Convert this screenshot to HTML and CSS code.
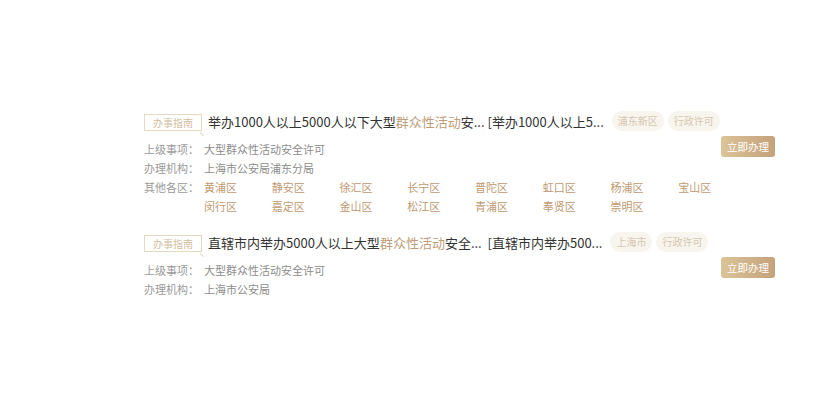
FILE: index.html
```html
<!DOCTYPE html>
<html lang="zh-CN">
<head>
<meta charset="utf-8">
<title>办事指南</title>
<link rel="stylesheet" href="styles.css">
</head>
<body>
<div class="list">
  <div class="item">
    <div class="head">
      <span class="guide">办事指南</span>
      <span class="title">举办1000人以上5000人以下大型<span class="hl">群众性活动</span>安... [举办1000人以上5...</span>
      <span class="pill first">浦东新区</span>
      <span class="pill">行政许可</span>
    </div>
    <div class="body">
      <div class="info">
        <div class="row"><span class="label">上级事项：</span><span class="value">大型群众性活动安全许可</span></div>
        <div class="row"><span class="label">办理机构：</span><span class="value">上海市公安局浦东分局</span></div>
        <div class="row"><span class="label">其他各区：</span>
          <div class="districts">
            <a>黄浦区</a><a>静安区</a><a>徐汇区</a><a>长宁区</a><a>普陀区</a><a>虹口区</a><a>杨浦区</a><a>宝山区</a>
            <a>闵行区</a><a>嘉定区</a><a>金山区</a><a>松江区</a><a>青浦区</a><a>奉贤区</a><a>崇明区</a>
          </div>
        </div>
      </div>
      <span class="btn">立即办理</span>
    </div>
  </div>
  <div class="item">
    <div class="head">
      <span class="guide">办事指南</span>
      <span class="title">直辖市内举办5000人以上大型<span class="hl">群众性活动</span>安全...&nbsp; [直辖市内举办500...</span>
      <span class="pill first">上海市</span>
      <span class="pill">行政许可</span>
    </div>
    <div class="body">
      <div class="info">
        <div class="row"><span class="label">上级事项：</span><span class="value">大型群众性活动安全许可</span></div>
        <div class="row"><span class="label">办理机构：</span><span class="value">上海市公安局</span></div>
      </div>
      <span class="btn">立即办理</span>
    </div>
  </div>
</div>
</body>
</html>
```
FILE: styles.css
```css
html, body {
  margin: 0;
  padding: 0;
  background: #ffffff;
}
body {
  font-family: "Noto Sans CJK SC", "Noto Sans", sans-serif;
}
.list {
  padding: 110px 0 0 144px;
  width: 631px;
}
.item + .item {
  margin-top: 15.5px;
}
.head {
  display: flex;
  align-items: center;
  height: 22px;
  white-space: nowrap;
}
.guide {
  position: relative;
  box-sizing: border-box;
  height: 17px;
  line-height: 15px;
  padding: 0 8px;
  border: 1px solid #e6d8c2;
  color: #d2bd9c;
  font-size: 10px;
  margin-right: 6px;
  margin-top: 2px;
}
.guide::after {
  content: "";
  position: absolute;
  right: -4px;
  bottom: -3px;
  width: 5px;
  height: 1px;
  background: #e6d8c2;
  transform: rotate(40deg);
  transform-origin: left center;
}
.title {
  font-size: 13px;
  color: #333333;
}
.hl {
  color: #bf9d7a;
}
.pill {
  height: 20px;
  line-height: 20px;
  border-radius: 10px;
  padding: 0 6px;
  font-size: 10px;
  color: #d6c7b0;
  background: #f8f4ee;
  margin-left: 4px;
}
.pill.first {
  margin-left: 8px;
}
.body {
  display: flex;
  align-items: flex-start;
  margin-top: 7.5px;
}
.info {
  flex: 1;
  min-width: 0;
  font-size: 11px;
  line-height: 19px;
}
.row {
  display: flex;
}
.label {
  flex: none;
  width: 60px;
  color: #9a9a9a;
}
.value {
  color: #8c8c8c;
}
.districts {
  display: grid;
  grid-template-columns: repeat(8, 67.75px);
}
.districts a {
  color: #c09a72;
  white-space: nowrap;
}
.btn {
  flex: none;
  margin-top: -3.5px;
  height: 21px;
  line-height: 21px;
  padding: 0 6px;
  border-radius: 3px;
  font-size: 10.5px;
  color: #ffffff;
  background: linear-gradient(90deg, #dcc398 0%, #c4a27c 100%);
}
```
